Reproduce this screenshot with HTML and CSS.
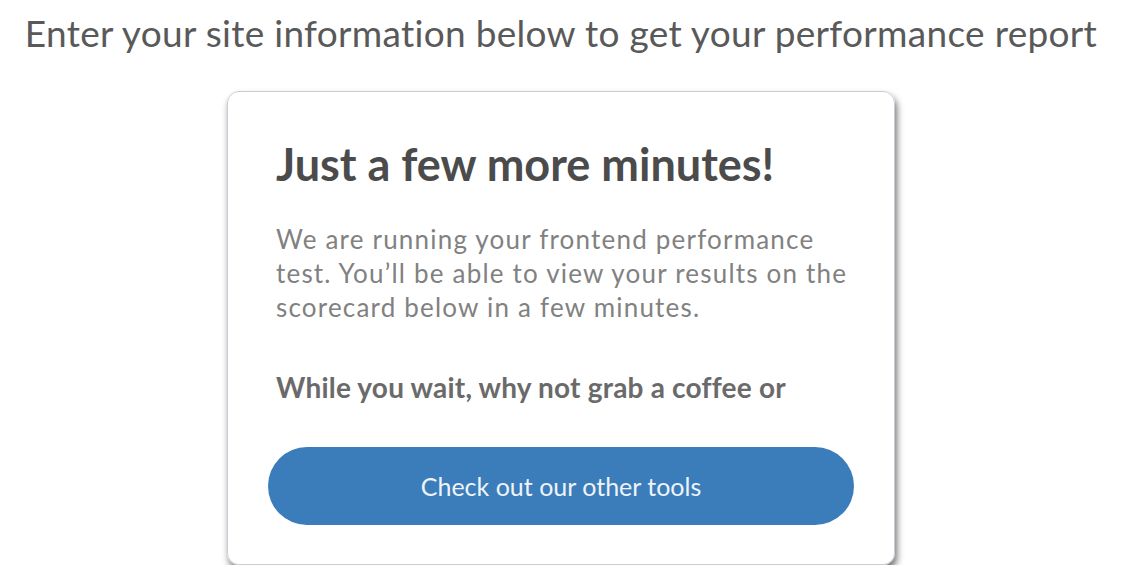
FILE: index.html
```html
<!DOCTYPE html>
<html>
<head>
<meta charset="utf-8">
<link rel="stylesheet" href="styles.css">
</head>
<body>
<div class="page">
  <h1 class="intro">Enter your site information below to get your performance report</h1>
  <div class="card">
    <h2 class="card-title">Just a few more minutes!</h2>
    <p class="card-text">We are running your frontend performance test. You’ll be able to view your results on the scorecard below in a few minutes.</p>
    <p class="card-strong">While you wait, why not grab a coffee or</p>
    <a class="btn" href="#">Check out our other tools</a>
  </div>
</div>
</body>
</html>
```
FILE: styles.css
```css
html, body {
  margin: 0;
  padding: 0;
  background: #ffffff;
}
body {
  font-family: Lato, "Open Sans", sans-serif;
}
.page {
  display: flex;
  flex-direction: column;
  align-items: center;
}
.intro {
  margin: 10px 0 0 0;
  font-size: 37px;
  font-weight: 400;
  line-height: 46px;
  color: #595959;
  letter-spacing: 0.3px;
}
.card {
  margin-top: 35px;
  width: 668px;
  height: 474px;
  box-sizing: border-box;
  border: 1px solid #c9ced6;
  border-radius: 12px;
  box-shadow: 2px 5px 7px rgba(0,0,0,0.55);
  padding: 44px 40px 0 40px;
  display: flex;
  flex-direction: column;
}
.card-title {
  margin: 0 0 0 8px;
  font-size: 45px;
  line-height: 56px;
  font-weight: 700;
  color: #4b4b4b;
}
.card-text {
  margin: 30px 0 0 8px;
  font-size: 26px;
  line-height: 34px;
  color: #818181;
  letter-spacing: 1.2px;
  width: 580px;
}
.card-strong {
  margin: 46px 0 0 8px;
  font-size: 28px;
  line-height: 34px;
  font-weight: 700;
  color: #6a6a6a;
  letter-spacing: 0.2px;
}
.btn {
  margin-top: 43px;
  height: 78px;
  border-radius: 39px;
  background: #3b7dba;
  color: #eef3f8;
  font-size: 25px;
  text-decoration: none;
  display: flex;
  align-items: center;
  justify-content: center;
}
```
